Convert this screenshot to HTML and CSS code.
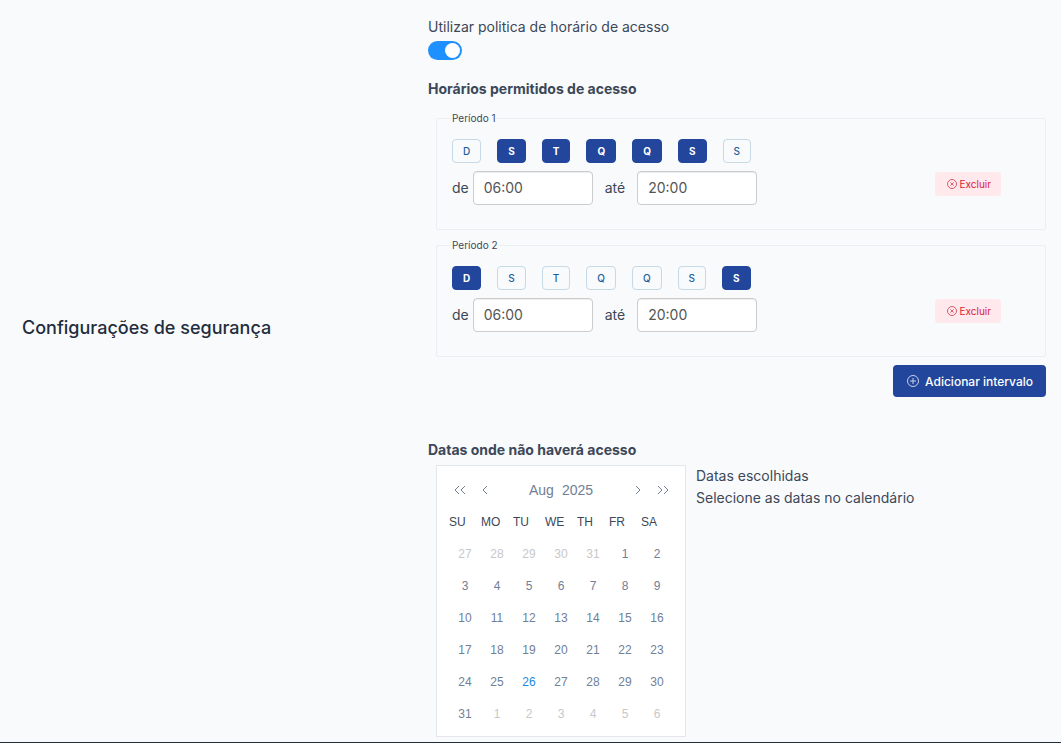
FILE: index.html
```
<!DOCTYPE html>
<html lang="pt-BR">
<head>
<meta charset="utf-8">
<title>Configurações de segurança</title>
<link rel="stylesheet" href="styles.css">
</head>
<body>
<main class="settings">
  <h1 class="settings-title">Configurações de segurança</h1>
  <div class="settings-content">
    <label class="policy-label" for="policy">Utilizar politica de horário de acesso</label>
    <input class="switch" type="checkbox" role="switch" id="policy" checked>

    <h2 class="section-title">Horários permitidos de acesso</h2>
    <div class="periods" id="periods"></div>
    <button class="add-button" type="button">
      <svg class="add-icon" viewBox="0 0 12 12" aria-hidden="true"><circle cx="6" cy="6" r="5.5"/><path d="M6 3v6M3 6h6"/></svg>
      Adicionar intervalo
    </button>

    <h2 class="section-title">Datas onde não haverá acesso</h2>
    <div class="dates">
      <div class="calendar">
        <div class="calendar-head">
          <button class="nav" type="button" aria-label="Ano anterior"><svg class="chevron" viewBox="0 0 12 10" aria-hidden="true"><path d="M5 1L1 5l4 4M11 1L7 5l4 4"/></svg></button>
          <button class="nav" type="button" aria-label="Mês anterior"><svg class="chevron" viewBox="0 0 12 10" aria-hidden="true"><path d="M8 1L4 5l4 4"/></svg></button>
          <div class="calendar-title"><span>Aug</span><span>2025</span></div>
          <button class="nav" type="button" aria-label="Próximo mês"><svg class="chevron" viewBox="0 0 12 10" aria-hidden="true"><path d="M4 1l4 4-4 4"/></svg></button>
          <button class="nav" type="button" aria-label="Próximo ano"><svg class="chevron" viewBox="0 0 12 10" aria-hidden="true"><path d="M1 1l4 4-4 4M7 1l4 4-4 4"/></svg></button>
        </div>
        <table class="month">
          <thead><tr><th>SU</th><th>MO</th><th>TU</th><th>WE</th><th>TH</th><th>FR</th><th>SA</th></tr></thead>
          <tbody id="days"></tbody>
        </table>
      </div>
      <div class="chosen">
        <div>Datas escolhidas</div>
        <div>Selecione as datas no calendário</div>
      </div>
    </div>
  </div>
</main>
<script src="script.js"></script>
</body>
</html>
```
FILE: styles.css
```
* {
  box-sizing: border-box;
}

body {
  margin: 0;
  background: #f9fafc;
  color: #3c4858;
  font: 14px/20px Inter, "Liberation Sans", sans-serif;
}

button, input {
  font-family: inherit;
}

.settings {
  display: grid;
  grid-template-columns: 390px 1fr;
  gap: 16px;
  padding: 17px 15px 5px 22px;
  border-bottom: 1px solid #1f2d3d;
}

.settings-title {
  margin: 0;
  padding-top: 299px;
  color: #1f2d3d;
  font-size: 18px;
  font-weight: 500;
  line-height: 24px;
}

.settings-content {
  display: flex;
  flex-direction: column;
  align-items: flex-start;
}

.policy-label {
  margin-bottom: 4px;
}

.switch {
  appearance: none;
  display: flex;
  justify-content: flex-end;
  width: 34px;
  height: 19px;
  margin: 0 0 19px;
  padding: 2px;
  border-radius: 10px;
  background: #1e90ff;
}

.switch::before {
  content: "";
  width: 15px;
  height: 15px;
  border-radius: 50%;
  background: #fff;
}

.switch:not(:checked) {
  justify-content: flex-start;
  background: #ccc;
}

.section-title {
  margin: 0;
  font-size: 14px;
  font-weight: 700;
  line-height: 20px;
}

.periods {
  display: flex;
  flex-direction: column;
  gap: 8px;
  align-self: stretch;
  margin: 12px 0 8px 8px;
}

.period {
  min-width: 0;
  margin: 0;
  padding: 14px 44px 0 15px;
  border: 1px solid #eceff2;
  border-radius: 2px;
}

.period-name {
  padding: 0;
  font-size: 10px;
  line-height: 14px;
}

.period-body {
  display: flex;
  align-items: center;
  justify-content: space-between;
}

.period-controls {
  padding-bottom: 24px;
}

.weekdays {
  display: flex;
  gap: 16px;
  margin-bottom: 8px;
}

.weekday {
  height: 24px;
  padding: 0 10px;
  border: 1px solid #c8d9e6;
  border-radius: 4px;
  background: transparent;
  color: #1b5e9e;
  font-size: 10px;
  font-weight: 500;
  line-height: 20px;
}

.weekday.selected {
  border-color: #21469b;
  background: #21469b;
  color: #fff;
  font-weight: 700;
}

.hours {
  display: flex;
  align-items: center;
}

.hour {
  width: 120px;
  height: 34px;
  margin: 0 12px 0 4px;
  padding: 0 10px 2px;
  border: 1px solid #ccc;
  border-radius: 4px;
  background: #fff;
  box-shadow: inset 0 1px 1px #00000013;
  color: #555;
  font-size: 14px;
}

.hour-end {
  margin-left: 12px;
}

.remove {
  display: flex;
  align-items: center;
  gap: 3px;
  height: 24px;
  padding: 0 10px 0 12px;
  border: 0;
  border-radius: 4px;
  background: #ffe9ec;
  color: #dc2035;
  font-size: 10px;
}

.remove-icon {
  width: 10px;
  height: 10px;
  fill: none;
  stroke: #e05a69;
}

.add-button {
  display: flex;
  align-items: center;
  align-self: flex-end;
  gap: 6px;
  height: 32px;
  margin-bottom: 43px;
  padding: 0 13px 0 14px;
  border: 0;
  border-radius: 4px;
  background: #21469b;
  color: #fff;
  font-size: 12px;
  font-weight: 500;
}

.add-icon {
  width: 12px;
  height: 12px;
  fill: none;
  stroke: #c7d1e6;
}

.dates {
  display: flex;
  gap: 10px;
  margin: 5px 0 0 8px;
}

.calendar {
  width: 250px;
  padding: 8px 12px 6px;
  border: 1px solid #e4e7ea;
  background: #fff;
  font-family: "Liberation Sans", Arial, sans-serif;
}

.calendar-head {
  display: flex;
  align-items: center;
  height: 32px;
  margin: 0 -2px;
}

.nav {
  display: flex;
  justify-content: center;
  width: 25px;
  padding: 0;
  border: 0;
  background: none;
}

.chevron {
  width: 12px;
  height: 10px;
  fill: none;
  stroke: #718096;
}

.calendar-title {
  display: flex;
  flex: 1;
  justify-content: center;
  gap: 8px;
  color: #718096;
}

.month {
  border-collapse: collapse;
  table-layout: fixed;
  width: 100%;
  font-size: 12px;
}

.month th, .month td {
  width: 32px;
  height: 32px;
  padding: 0;
}

.month th {
  font-weight: 400;
  text-align: left;
}

.day {
  width: 32px;
  height: 32px;
  padding: 0;
  border: 0;
  background: none;
  color: #718096;
  font-size: 12px;
  display: block;
}

.day.outside {
  color: #c8c8c8;
}

.day.today {
  color: #1e88e5;
}

.chosen {
  line-height: 22px;
}
```
FILE: script.js
```
const letters = ["D", "S", "T", "Q", "Q", "S", "S"];
const periods = [
  { selected: [1, 2, 3, 4, 5], from: "06:00", to: "20:00" },
  { selected: [0, 6], from: "06:00", to: "20:00" }
];

document.getElementById("periods").innerHTML = periods.map((period, i) => {
  const days = letters.map((letter, day) => {
    const on = period.selected.includes(day);
    return `<button class="weekday${on ? " selected" : ""}" type="button" aria-pressed="${on}">${letter}</button>`;
  }).join("");
  return `<fieldset class="period">
    <legend class="period-name">Período ${i + 1}</legend>
    <div class="period-body">
      <div class="period-controls">
        <div class="weekdays">${days}</div>
        <div class="hours">
          <label for="from${i}">de</label><input class="hour" type="text" id="from${i}" value="${period.from}">
          <label for="to${i}">até</label><input class="hour hour-end" type="text" id="to${i}" value="${period.to}">
        </div>
      </div>
      <button class="remove" type="button">
        <svg class="remove-icon" viewBox="0 0 10 10" aria-hidden="true"><circle cx="5" cy="5" r="4.5"/><path d="M3.5 3.5l3 3M6.5 3.5l-3 3"/></svg>Excluir
      </button>
    </div>
  </fieldset>`;
}).join("");

const firstCell = new Date(2025, 6, 27);
let rows = "";
for (let week = 0; week < 6; week++) {
  rows += "<tr>";
  for (let d = 0; d < 7; d++) {
    const date = new Date(2025, 6, firstCell.getDate() + week * 7 + d);
    let kind = "";
    if (date.getMonth() !== 7) kind = " outside";
    else if (date.getDate() === 26) kind = " today";
    rows += `<td><button class="day${kind}" type="button">${date.getDate()}</button></td>`;
  }
  rows += "</tr>";
}
document.getElementById("days").innerHTML = rows;
```
